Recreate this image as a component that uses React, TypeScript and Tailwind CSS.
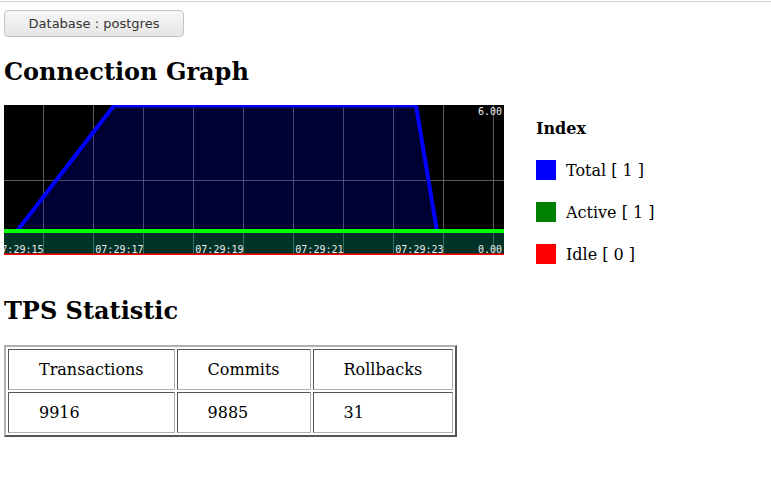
import React from "react";

const gridX = [39.5, 89.5, 139.5, 189.5, 239.5, 289.5, 339.5, 389.5, 439.5, 489.5];

const timeLabels = [
  { x: 39.5, text: "07:29:15" },
  { x: 139.5, text: "07:29:17" },
  { x: 239.5, text: "07:29:19" },
  { x: 339.5, text: "07:29:21" },
  { x: 439.5, text: "07:29:23" },
];

const legend = [
  { color: "bg-[#0000ff]", label: "Total [ 1 ]" },
  { color: "bg-[#008000]", label: "Active [ 1 ]" },
  { color: "bg-[#ff0000]", label: "Idle [ 0 ]" },
];

const ConnectionChart = () => (
  <svg width={500} height={150} viewBox="0 0 500 150" className="block shrink-0">
    <rect x={0} y={0} width={500} height={150} fill="#000000" />
    {gridX.map((x) => (
      <line key={x} x1={x} y1={0} x2={x} y2={150} stroke="#5a5a5a" strokeWidth={1} />
    ))}
    <line x1={0} y1={75.5} x2={500} y2={75.5} stroke="#5a5a5a" strokeWidth={1} />

    {/* total */}
    <path
      d="M-10,126 L13,126 L110,0.5 L412,0.5 L433,126 L510,126 L510,152 L-10,152 Z"
      fill="rgba(0,0,255,0.2)"
    />
    <path
      d="M-10,126 L13,126 L110,0.5 L412,0.5 L433,126 L510,126"
      fill="none"
      stroke="#0000ff"
      strokeWidth={4}
    />

    {/* active */}
    <path d="M-10,126 L510,126 L510,152 L-10,152 Z" fill="rgba(0,255,0,0.2)" />
    <line x1={-10} y1={126} x2={510} y2={126} stroke="#00ff00" strokeWidth={4} />

    {/* idle */}
    <line x1={-10} y1={150.5} x2={510} y2={150.5} stroke="#ff0000" strokeWidth={4} />

    <g fill="#eeeeee" fontFamily="'DejaVu Sans Mono', monospace" fontSize={10}>
      {timeLabels.map((t) => (
        <text key={t.text} x={t.x} y={148} textAnchor="end">
          {t.text}
        </text>
      ))}
      <text x={498} y={10} textAnchor="end">
        6.00
      </text>
      <text x={498} y={148} textAnchor="end">
        0.00
      </text>
    </g>
  </svg>
);

const Cell = ({ children }: { children: React.ReactNode }) => (
  <td className="border border-t-[#555555] border-l-[#555555] border-b-[#b0b0b0] border-r-[#b0b0b0] px-[30px] py-[10px] leading-[19px] text-left">
    {children}
  </td>
);

export default function App() {
  return (
    <div className="min-h-screen bg-white pt-px font-['DejaVu_Serif',serif] text-[16px] text-black">
      <div className="h-px bg-[#d0d0d0]" />
      <div className="px-[4px]">
        <button className="mt-[8px] flex h-[27px] w-[180px] items-center justify-center rounded-[4px] border border-[#c4c4c4] bg-gradient-to-b from-[#f7f7f7] to-[#e6e6e6] font-['DejaVu_Sans',sans-serif] text-[13px] text-[#333333]">
          Database : postgres
        </button>

        <h2 className="mt-[21px] text-[24px] font-bold leading-[28px]">Connection Graph</h2>

        <div className="mt-[19px] flex h-[150px] items-start">
          <ConnectionChart />
          <div className="ml-[32px] flex flex-col gap-[22px] pt-[14px]">
            <div className="font-bold leading-[19px]">Index</div>
            {legend.map((l) => (
              <div key={l.label} className="flex h-[20px] items-center gap-[10px]">
                <span className={`block h-[20px] w-[20px] ${l.color}`} />
                <span className="leading-[19px]">{l.label}</span>
              </div>
            ))}
          </div>
        </div>

        <h2 className="mt-[42px] text-[24px] font-bold leading-[28px]">TPS Statistic</h2>

        <table className="mt-[20px] border-separate border-spacing-[2px] border-2 border-t-[#b0b0b0] border-l-[#b0b0b0] border-b-[#555555] border-r-[#555555]">
          <tbody>
            <tr>
              <Cell>Transactions</Cell>
              <Cell>Commits</Cell>
              <Cell>Rollbacks</Cell>
            </tr>
            <tr>
              <Cell>9916</Cell>
              <Cell>9885</Cell>
              <Cell>31</Cell>
            </tr>
          </tbody>
        </table>
      </div>
    </div>
  );
}
